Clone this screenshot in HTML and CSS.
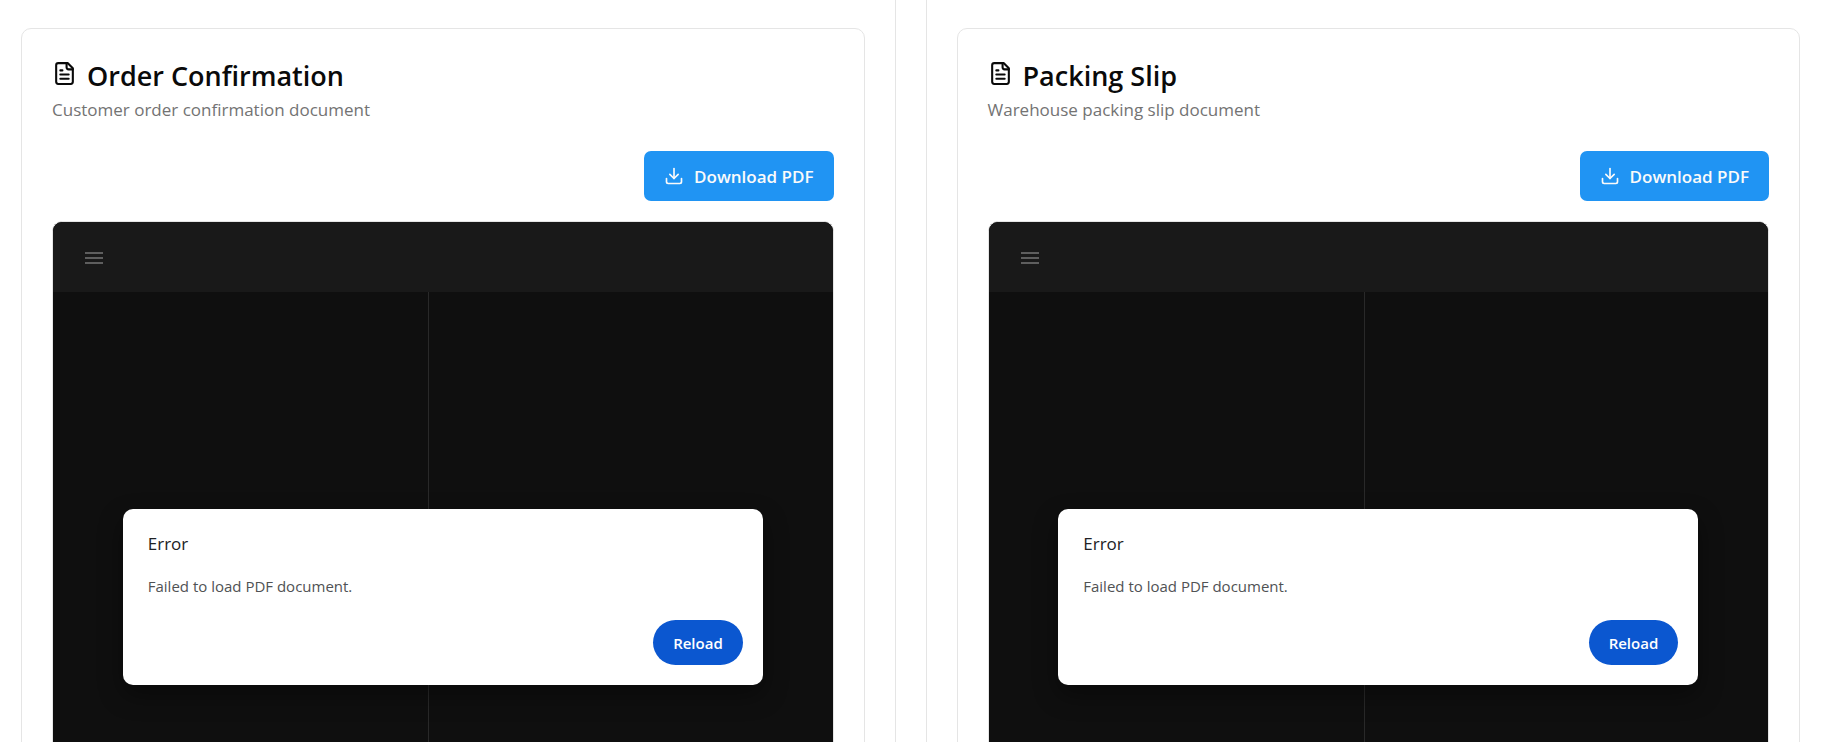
FILE: index.html
```html
<!DOCTYPE html>
<html lang="en">
<head>
<meta charset="utf-8">
<meta name="viewport" content="width=device-width, initial-scale=1">
<title>Order Documents</title>
<link rel="stylesheet" href="styles.css">
</head>
<body>
<svg class="sprite" aria-hidden="true">
  <symbol id="icon-file" viewBox="0 0 24 24"><path d="M15 2H6a2 2 0 0 0-2 2v16a2 2 0 0 0 2 2h12a2 2 0 0 0 2-2V7Z"/><path d="M14 2v4a2 2 0 0 0 2 2h4"/><path d="M10 9H8"/><path d="M16 13H8"/><path d="M16 17H8"/></symbol>
  <symbol id="icon-download" viewBox="0 0 24 24"><path d="M21 15v4a2 2 0 0 1-2 2H5a2 2 0 0 1-2-2v-4"/><path d="M7 10l5 5 5-5"/><path d="M12 15V3"/></symbol>
  <symbol id="icon-menu" viewBox="0 0 24 24"><path d="M3 7h18M3 12h18M3 17h18"/></symbol>
</svg>
<main class="documents">
  <section class="panel panel-first">
    <article class="card">
      <header class="card-header">
        <h2 class="card-title"><svg class="icon icon-file" aria-hidden="true"><use href="#icon-file"/></svg>Order Confirmation</h2>
        <p class="card-description">Customer order confirmation document</p>
      </header>
      <div class="card-actions">
        <button class="download" type="button"><svg class="icon icon-download" aria-hidden="true"><use href="#icon-download"/></svg>Download PDF</button>
      </div>
      <div class="viewer">
        <div class="toolbar"><button class="menu" type="button" aria-label="Menu" disabled><svg class="icon icon-menu" aria-hidden="true"><use href="#icon-menu"/></svg></button></div>
        <div class="viewer-body"><div class="sidebar"></div><div class="page-area"></div></div>
        <div class="overlay">
          <div class="dialog" role="alertdialog" aria-labelledby="error-order" aria-describedby="message-order">
            <h3 class="dialog-title" id="error-order">Error</h3>
            <p class="dialog-message" id="message-order">Failed to load PDF document.</p>
            <div class="dialog-actions"><button class="reload" type="button">Reload</button></div>
          </div>
        </div>
      </div>
    </article>
  </section>
  <section class="panel panel-last">
    <article class="card">
      <header class="card-header">
        <h2 class="card-title"><svg class="icon icon-file" aria-hidden="true"><use href="#icon-file"/></svg>Packing Slip</h2>
        <p class="card-description">Warehouse packing slip document</p>
      </header>
      <div class="card-actions">
        <button class="download" type="button"><svg class="icon icon-download" aria-hidden="true"><use href="#icon-download"/></svg>Download PDF</button>
      </div>
      <div class="viewer">
        <div class="toolbar"><button class="menu" type="button" aria-label="Menu" disabled><svg class="icon icon-menu" aria-hidden="true"><use href="#icon-menu"/></svg></button></div>
        <div class="viewer-body"><div class="sidebar"></div><div class="page-area"></div></div>
        <div class="overlay">
          <div class="dialog" role="alertdialog" aria-labelledby="error-slip" aria-describedby="message-slip">
            <h3 class="dialog-title" id="error-slip">Error</h3>
            <p class="dialog-message" id="message-slip">Failed to load PDF document.</p>
            <div class="dialog-actions"><button class="reload" type="button">Reload</button></div>
          </div>
        </div>
      </div>
    </article>
  </section>
</main>
</body>
</html>
```
FILE: styles.css
```css
* { box-sizing: border-box; }

body {
  margin: 0;
  height: 100vh;
  overflow: hidden;
  background: #fff;
  color: #0a0a0a;
  font-family: "Segoe UI", "Open Sans", "Noto Sans", sans-serif;
}

h2, h3, p { margin: 0; }
button { border: 0; font-family: inherit; }
.sprite { display: none; }

.icon {
  flex: none;
  fill: none;
  stroke: currentColor;
  stroke-width: 2;
  stroke-linecap: round;
  stroke-linejoin: round;
}
.icon-file { width: 25px; height: 25px; margin-bottom: 5px; }
.icon-download { width: 20px; height: 20px; }
.icon-menu { width: 24px; height: 24px; stroke-linecap: butt; }

.documents { display: flex; gap: 30px; }
.panel { flex: 1; min-width: 0; padding-top: 28px; }
.panel-first { padding-left: 21px; padding-right: 30px; border-right: 1px solid #e5e5e5; }
.panel-last { padding-left: 30px; padding-right: 22px; border-left: 1px solid #e5e5e5; }

.card { padding: 30px; border: 1px solid #e5e5e5; border-radius: 10px; }
.card-title {
  display: flex;
  align-items: center;
  gap: 10px;
  font-size: 27px;
  font-weight: 600;
  line-height: 34px;
}
.card-description { color: #737373; font-size: 17px; line-height: 34px; }

.card-actions { display: flex; justify-content: flex-end; padding: 24px 0 20px; }
.download {
  display: flex;
  align-items: center;
  gap: 10px;
  height: 50px;
  padding: 0 20px;
  border-radius: 7px;
  background: #2094f3;
  color: #fafafa;
  font-size: 17px;
  font-weight: 600;
}

.viewer {
  position: relative;
  display: flex;
  flex-direction: column;
  height: 752px;
  overflow: hidden;
  border: 1px solid #e5e5e5;
  border-radius: 10px;
  background: #0f0f0f;
}
.toolbar {
  display: flex;
  align-items: center;
  height: 70px;
  padding: 2px 29px 0;
  background: #191919;
}
.menu { display: flex; padding: 0; background: none; color: #5e5e5e; }
.viewer-body { display: flex; flex: 1; }
.sidebar { flex: none; width: 376px; border-right: 1px solid #292929; }
.page-area { flex: 1; }

.overlay {
  position: absolute;
  inset: 0;
  display: flex;
  align-items: center;
  justify-content: center;
  padding: 0 20px;
}
.dialog {
  width: 100%;
  max-width: 640px;
  padding: 20px;
  border-radius: 10px;
  background: #fff;
  box-shadow: 0 10px 24px rgba(0, 0, 0, 0.4);
}
.dialog-title { padding: 0 5px; color: #202124; font-size: 17px; font-weight: 400; line-height: 30px; }
.dialog-message { padding: 15px 5px; color: #505254; font-size: 15px; line-height: 24px; }
.dialog-actions { display: flex; justify-content: flex-end; padding-top: 7px; }
.reload {
  height: 45px;
  padding: 0 20px;
  border-radius: 23px;
  background: #0b57d0;
  color: #fff;
  font-size: 15px;
  font-weight: 600;
}
```
